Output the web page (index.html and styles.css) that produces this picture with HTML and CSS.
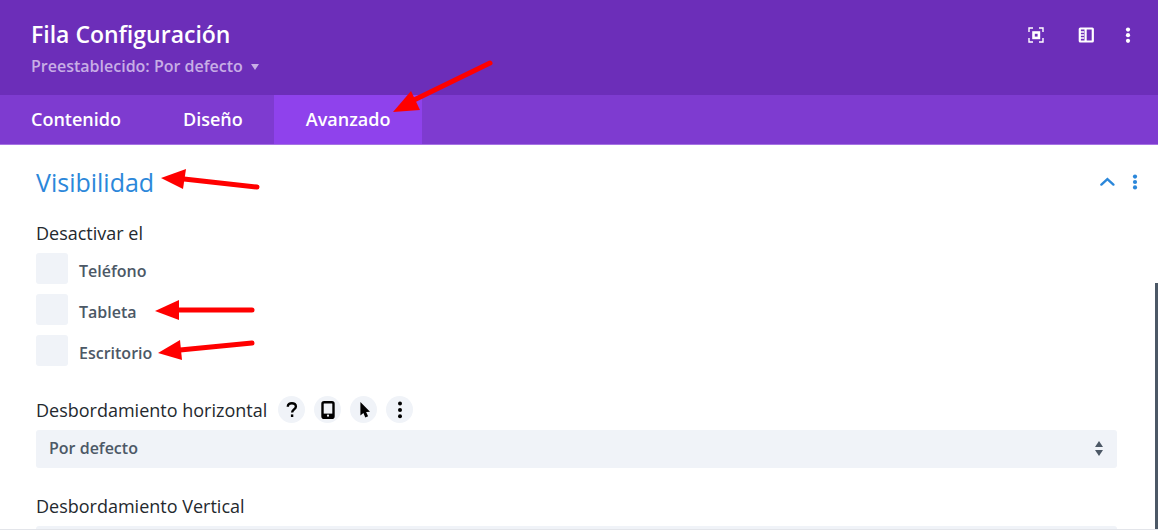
FILE: index.html
```html
<!DOCTYPE html>
<html lang="es">

<head>
    <meta charset="UTF-8">
    <meta name="viewport" content="width=device-width, initial-scale=1.0">
    <title>Fila Configuración</title>
    <link rel="stylesheet" href="styles.css">
</head>

<body>
    <div class="modal">
        <header class="modal-header">
            <div class="modal-heading">
                <h1>Fila Configuración</h1>
                <button type="button" class="preset">Preestablecido: Por defecto <span class="caret"></span></button>
            </div>
            <div class="header-buttons">
                <button type="button" aria-label="Expandir">
                    <svg width="16" height="16" viewBox="0 0 16 16" fill="none" stroke="currentColor">
                        <path d="M1 5V1h4M11 1h4v4M15 11v4h-4M5 15H1v-4" stroke-width="1.4" />
                        <rect x="5.5" y="5.5" width="5.4" height="5.4" stroke-width="2.6" />
                    </svg>
                </button>
                <button type="button" aria-label="Acoplar">
                    <svg width="16" height="16" viewBox="0 0 16 16" fill="none" stroke="currentColor">
                        <rect x="1.8" y="1.5" width="13" height="13" rx="0.5" stroke-width="2.2" />
                        <path d="M7.6 1v14" stroke-width="2.2" />
                        <path d="M2 5h4M2 8h4M2 11h4" stroke-width="1.4" />
                    </svg>
                </button>
                <button type="button" aria-label="Más opciones">
                    <svg width="16" height="16" viewBox="0 0 16 16" fill="currentColor">
                        <circle cx="8" cy="2.6" r="2.1" />
                        <circle cx="8" cy="8.2" r="2.1" />
                        <circle cx="8" cy="13.8" r="2.1" />
                    </svg>
                </button>
            </div>
        </header>

        <nav class="tabs">
            <button type="button">Contenido</button>
            <button type="button">Diseño</button>
            <button type="button" class="active">Avanzado</button>
        </nav>

        <main class="options">
            <div class="group-title">
                <h2>Visibilidad</h2>
                <div class="group-buttons">
                    <button type="button" aria-label="Contraer">
                        <svg width="16" height="16" viewBox="0 0 16 16" fill="none" stroke="currentColor" stroke-width="2.4" stroke-linecap="round">
                            <path d="M2.4 10.6L8.4 5.2l6 5.4" />
                        </svg>
                    </button>
                    <button type="button" aria-label="Más opciones">
                        <svg width="16" height="16" viewBox="0 0 16 16" fill="currentColor">
                            <circle cx="8" cy="2.6" r="2.1" />
                            <circle cx="8" cy="8" r="2.1" />
                            <circle cx="8" cy="13.4" r="2.1" />
                        </svg>
                    </button>
                </div>
            </div>

            <fieldset class="checks">
                <legend>Desactivar el</legend>
                <label><input type="checkbox" name="phone"> <span>Teléfono</span></label>
                <label><input type="checkbox" name="tablet"> <span>Tableta</span></label>
                <label><input type="checkbox" name="desktop"> <span>Escritorio</span></label>
            </fieldset>

            <div class="option">
                <div class="option-title">
                    <label for="overflow-x">Desbordamiento horizontal</label>
                    <button type="button" aria-label="Ayuda">
                        <svg width="18" height="18" viewBox="0 0 18 18" fill="none" stroke="currentColor" stroke-width="2.4">
                            <path d="M4.8 5.8C4.8 3.3 6.6 2.2 8.9 2.2c2.4 0 4 1.2 4 3.2 0 2.9-3.8 3-3.8 6.1" />
                            <path d="M9.1 13.4v2.6" />
                        </svg>
                    </button>
                    <button type="button" aria-label="Adaptable">
                        <svg width="18" height="18" viewBox="0 0 18 18">
                            <rect x="3.5" y="1.2" width="11" height="15.6" rx="1.6" fill="none" stroke="currentColor" stroke-width="2.4" />
                            <path d="M4 12.6h10v3.9H4z" fill="currentColor" />
                            <circle cx="9" cy="14.7" r="1.1" fill="#f0f3f8" />
                        </svg>
                    </button>
                    <button type="button" aria-label="Cursor">
                        <svg width="18" height="18" viewBox="0 0 18 18" fill="currentColor">
                            <path d="M5.4 1v13.6l3-2.5 1.9 4.4 2.8-1.2-2-4.2 3.9-.3z" />
                        </svg>
                    </button>
                    <button type="button" aria-label="Más opciones">
                        <svg width="18" height="18" viewBox="0 0 18 18" fill="currentColor">
                            <circle cx="9" cy="2.6" r="2" />
                            <circle cx="9" cy="9" r="2" />
                            <circle cx="9" cy="15.2" r="2" />
                        </svg>
                    </button>
                </div>
                <div class="select">
                    <select id="overflow-x">
                        <option>Por defecto</option>
                    </select>
                </div>
            </div>

            <div class="option">
                <div class="option-title">
                    <label for="overflow-y">Desbordamiento Vertical</label>
                </div>
                <div class="select">
                    <select id="overflow-y">
                        <option>Por defecto</option>
                    </select>
                </div>
            </div>
        </main>

        <div class="scrollbar"></div>

        <!-- Red arrows over the panel -->
        <svg class="arrows" width="520" height="380" viewBox="0 0 520 380" fill="#f00" stroke="#f00" stroke-linecap="round">
            <g stroke-width="5">
                <path d="M490 63L412 101" />
                <path d="M257 187L184 179" />
                <path d="M252 310H178" />
                <path d="M252 343L180 350" />
            </g>
            <g stroke="none">
                <path d="M393 112L411 91L420 110z" />
                <path d="M161 178L186 169L183 189z" />
                <path d="M155 311L179 300V320z" />
                <path d="M158 353L180 340L182 360z" />
            </g>
        </svg>
    </div>
</body>

</html>
```

FILE: styles.css
```css
* {
    box-sizing: border-box;
}

body {
    margin: 0;
    font-family: "Open Sans", "Noto Sans", sans-serif;
    font-size: 16px;
    color: #4c5866;
    background: #fff;
}

h1,
h2 {
    margin: 0;
}

button {
    padding: 0;
    border: 0;
    background: none;
    color: inherit;
    font: inherit;
    cursor: pointer;
}

svg {
    display: block;
}

.modal {
    position: relative;
    display: flex;
    flex-direction: column;
    height: 100vh;
    overflow: hidden;
    border-bottom: 1px solid #e3e5ea;
}

/* Header */
.modal-header {
    display: flex;
    flex-shrink: 0;
    justify-content: space-between;
    padding: 18px 22px 17px 31px;
    background: #6c2eb9;
    color: #fff;
}

.modal-heading h1 {
    font-size: 23px;
    font-weight: 600;
    line-height: 32px;
}

.preset {
    display: flex;
    align-items: center;
    gap: 8px;
    margin-top: 4px;
    font-weight: 600;
    line-height: 24px;
    color: #c8aee6;
}

.caret {
    margin-top: 2px;
    border: 4px solid transparent;
    border-top: 6px solid #c8aee6;
    border-bottom: 0;
}

.header-buttons {
    display: flex;
    align-items: center;
    gap: 34px;
    height: 34px;
}

.header-buttons button:last-child {
    margin-left: -8px;
}

/* Tabs */
.tabs {
    display: flex;
    flex-shrink: 0;
    background: #7e3bd0;
    border-bottom: 1px solid #a673e3;
    color: #fff;
}

.tabs button {
    padding: 0 31px;
    font-size: 18px;
    font-weight: 600;
    line-height: 49px;
}

.tabs .active {
    padding: 0 32px;
    background: #8f42ec;
}

/* Options */
.options {
    padding: 17px 41px 0 36px;
}

.group-title {
    display: flex;
    align-items: center;
    justify-content: space-between;
}

.group-title h2 {
    font-size: 25px;
    font-weight: 400;
    line-height: 40px;
    color: #2b87da;
}

.group-buttons {
    display: flex;
    gap: 12px;
    margin-right: -26px;
    color: #2b87da;
}

.checks {
    display: flex;
    flex-direction: column;
    gap: 10px;
    margin: 19px 0 30px;
    padding: 0;
    border: 0;
}

.checks legend,
.option-title label {
    padding: 0;
    font-size: 18px;
    font-weight: 500;
    line-height: 24px;
    color: #24292e;
}

.checks legend {
    margin-bottom: 8px;
}

.checks label {
    display: flex;
    align-items: center;
    gap: 11px;
    font-weight: 600;
}

.checks span {
    padding-top: 4px;
}

.checks input {
    appearance: none;
    width: 32px;
    height: 31px;
    margin: 0;
    border-radius: 3px;
    background: #f0f3f8;
}

.option {
    margin-bottom: 24px;
}

.option-title {
    display: flex;
    align-items: center;
    gap: 9px;
    min-height: 27px;
    margin-bottom: 7px;
}

.option-title label {
    margin-right: 2px;
}

.option-title button {
    display: grid;
    place-items: center;
    width: 27px;
    height: 27px;
    border-radius: 50%;
    background: #f0f3f8;
    color: #000;
}

.select {
    position: relative;
}

.select select {
    appearance: none;
    display: block;
    width: 100%;
    height: 38px;
    padding: 0 13px 2px;
    border: 0;
    border-radius: 3px;
    background: #f0f3f8;
    color: #4c5866;
    font: inherit;
    font-weight: 600;
}

/* Up and down triangles of the drop-down */
.select::before,
.select::after {
    content: "";
    position: absolute;
    right: 14px;
    border: 4px solid transparent;
}

.select::before {
    top: 11px;
    border-top: 0;
    border-bottom: 6px solid #4c5866;
}

.select::after {
    top: 20px;
    border-bottom: 0;
    border-top: 6px solid #4c5866;
}

.scrollbar {
    position: absolute;
    top: 283px;
    right: 0;
    bottom: 0;
    width: 3px;
    background: #4c5866;
}

.arrows {
    position: absolute;
    top: 0;
    left: 0;
    pointer-events: none;
}
```
